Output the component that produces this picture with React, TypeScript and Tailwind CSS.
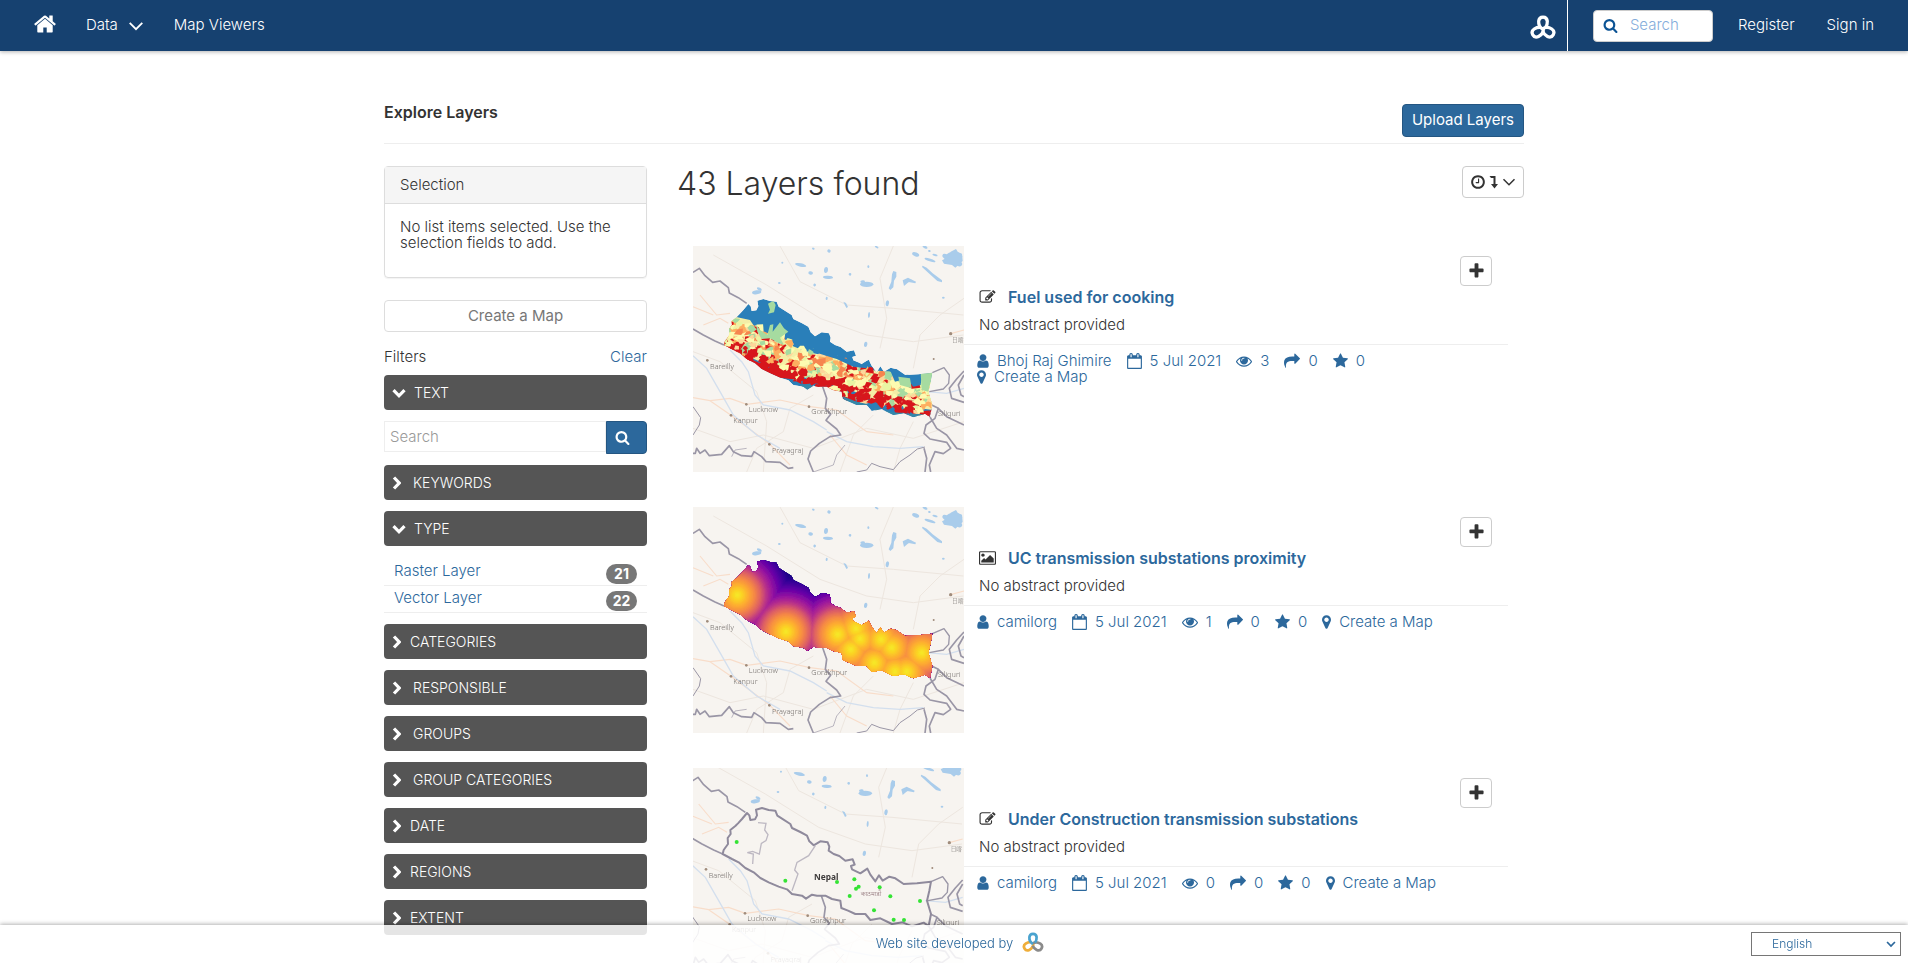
import React from "react";

const ICONS: Record<string, { box: string; d: string }> = {
  home: {
    box: "0 0 1792 1792",
    d: "M1472 992v480q0 26-19 45t-45 19h-384v-384h-256v384h-384q-26 0-45-19t-19-45v-480q0-1 .5-3t.5-3l575-474 575 474q1 2 1 6zm223-69l-62 74q-8 9-21 11h-3q-13 0-21-7l-692-577-692 577q-12 8-24 7-13-2-21-11l-62-74q-8-10-7-23.5t11-21.5l719-599q32-26 76-26t76 26l244 204v-195q0-14 9-23t23-9h192q14 0 23 9t9 23v408l219 182q10 8 11 21.5t-7 23.5z",
  },
  search: {
    box: "0 0 1792 1792",
    d: "M1216 832q0-185-131.5-316.5t-316.5-131.5-316.5 131.5-131.5 316.5 131.5 316.5 316.5 131.5 316.5-131.5 131.5-316.5zm512 832q0 52-38 90t-90 38q-54 0-90-38l-343-342q-179 124-399 124-143 0-273.5-55.5t-225-150-150-225-55.5-273.5 55.5-273.5 150-225 225-150 273.5-55.5 273.5 55.5 225 150 150 225 55.5 273.5q0 220-124 399l343 343q37 37 37 90z",
  },
  user: {
    box: "256 0 1280 1792",
    d: "M1536 1399q0 109-62.5 187t-150.5 78h-854q-88 0-150.5-78t-62.5-187q0-85 8.5-160.5t31.5-152 58.5-131 94-89 134.5-34.5q131 128 313 128t313-128q76 0 134.5 34.5t94 89 58.5 131 31.5 152 8.5 160.5zm-256-887q0 159-112.5 271.5t-271.5 112.5-271.5-112.5-112.5-271.5 112.5-271.5 271.5-112.5 271.5 112.5 112.5 271.5z",
  },
  calendar: {
    box: "64 0 1664 1792",
    d: "M192 1664h1408v-1024h-1408v1024zm384-1216v-288q0-14-9-23t-23-9h-64q-14 0-23 9t-9 23v288q0 14 9 23t23 9h64q14 0 23-9t9-23zm768 0v-288q0-14-9-23t-23-9h-64q-14 0-23 9t-9 23v288q0 14 9 23t23 9h64q14 0 23-9t9-23zm384-64v1280q0 52-38 90t-90 38h-1408q-52 0-90-38t-38-90v-1280q0-52 38-90t90-38h128v-96q0-66 47-113t113-47h64q66 0 113 47t47 113v96h384v-96q0-66 47-113t113-47h64q66 0 113 47t47 113v96h128q52 0 90 38t38 90z",
  },
  eye: {
    box: "0 0 1792 1792",
    d: "M1664 960q-152-236-381-353 61 104 61 225 0 185-131.5 316.5t-316.5 131.5-316.5-131.5-131.5-316.5q0-121 61-225-229 117-381 353 133 205 333.5 326.5t434.5 121.5 434.5-121.5 333.5-326.5zm-720-384q0-20-14-34t-34-14q-125 0-214.5 89.5t-89.5 214.5q0 20 14 34t34 14 34-14 14-34q0-86 61-147t147-61q20 0 34-14t14-34zm848 384q0 34-20 69-140 230-376.5 368.5t-499.5 138.5-499.5-139-376.5-368q-20-35-20-69t20-69q140-229 376.5-368t499.5-139 499.5 139 376.5 368q20 35 20 69z",
  },
  share: {
    box: "0 0 1792 1792",
    d: "M1792 640q0 26-19 45l-512 512q-19 19-45 19t-45-19-19-45v-256h-224q-98 0-175.5 6t-154 21.5-133 42.5-105.5 69.5-80 101-48.5 138.5-17.5 181q0 55 5 123 0 6 2.5 23.5t2.5 26.5q0 15-8.5 25t-23.5 10q-16 0-28-17-7-9-13-22t-13.5-30-10.5-24q-127-285-127-451 0-199 53-333 162-403 875-403h224v-256q0-26 19-45t45-19 45 19l512 512q19 19 19 45z",
  },
  star: {
    box: "64 0 1664 1792",
    d: "M1728 647q0 22-26 48l-363 354 86 500q1 7 1 20 0 21-10.5 35.5t-30.5 14.5q-19 0-40-12l-449-236-449 236q-22 12-40 12-21 0-31.5-14.5t-10.5-35.5q0-6 2-20l86-500-364-354q-25-27-25-48 0-37 56-46l502-73 225-455q19-41 49-41t49 41l225 455 502 73q56 9 56 46z",
  },
  marker: {
    box: "384 0 1024 1792",
    d: "M1152 640q0-106-75-181t-181-75-181 75-75 181 75 181 181 75 181-75 75-181zm256 0q0 109-33 179l-364 774q-16 33-47.5 52t-67.5 19-67.5-19-46.5-52l-365-774q-33-70-33-179 0-212 150-362t362-150 362 150 150 362z",
  },
  vector: {
    box: "0 0 1792 1792",
    d: "M888 1184l116-116-152-152-116 116v56h96v96h56zm440-720q-16-16-33 1l-350 350q-17 17-1 33t33-1l350-350q17-17 1-33zm80 594v190q0 119-84.5 203.5t-203.5 84.5h-832q-119 0-203.5-84.5t-84.5-203.5v-832q0-119 84.5-203.5t203.5-84.5h832q63 0 117 25 15 7 18 23 3 17-9 29l-49 49q-14 14-32 8-23-6-45-6h-832q-66 0-113 47t-47 113v832q0 66 47 113t113 47h832q66 0 113-47t47-113v-126q0-13 9-22l64-64q15-15 35-7t20 29zm-96-738l288 288-672 672h-288v-288zm444 132l-92 92-288-288 92-92q28-28 68-28t68 28l152 152q28 28 28 68t-28 68z",
  },
  raster: {
    box: "-64 0 1920 1792",
    d: "M576 576q0 80-56 136t-136 56-136-56-56-136 56-136 136-56 136 56 56 136zm1024 384v448h-1408v-192l320-320 160 160 512-512zm96-704h-1600q-13 0-22.5 9.5t-9.5 22.5v1216q0 13 9.5 22.5t22.5 9.5h1600q13 0 22.5-9.5t9.5-22.5v-1216q0-13-9.5-22.5t-22.5-9.5zm160 32v1216q0 66-47 113t-113 47h-1600q-66 0-113-47t-47-113v-1216q0-66 47-113t113-47h1600q66 0 113 47t47 113z",
  },
  plus: {
    box: "192 0 1408 1792",
    d: "M1600 736v192q0 40-28 68t-68 28h-416v416q0 40-28 68t-68 28h-192q-40 0-68-28t-28-68v-416h-416q-40 0-68-28t-28-68v-192q0-40 28-68t68-28h416v-416q0-40 28-68t68-28h192q40 0 68 28t28 68v416h416q40 0 68 28t28 68z",
  },
  clock: {
    box: "128 0 1536 1792",
    d: "M1024 544v448q0 14-9 23t-23 9h-320q-14 0-23-9t-9-23v-64q0-14 9-23t23-9h224v-352q0-14 9-23t23-9h64q14 0 23 9t9 23zm416 352q0-148-73-273t-198-198-273-73-273 73-198 198-73 273 73 273 198 198 273 73 273-73 198-198 73-273zm224 0q0 209-103 385.5t-279.5 279.5-385.5 103-385.5-103-279.5-279.5-103-385.5 103-385.5 279.5-279.5 385.5-103 385.5 103 279.5 279.5 103 385.5z",
  },
};

function Icon({ name, className }: { name: string; className: string }) {
  return (
    <svg viewBox={ICONS[name].box} className={className} fill="currentColor" aria-hidden="true">
      <path d={ICONS[name].d} />
    </svg>
  );
}

function Caret({ className, width }: { className: string; width: number }) {
  return (
    <svg viewBox="0 0 14 14" className={className} fill="none" stroke="currentColor" strokeWidth={width} aria-hidden="true">
      <path d="M1.5 4.2 7 9.8l5.5-5.6" />
    </svg>
  );
}

/* Three interlocked loops joined at the centre. */
function Trefoil({ className, colors }: { className: string; colors: [string, string, string] }) {
  const loop = "M13 15C8.5 12.500 8.300 9 8.500 6.500C9 0.800 17 0.800 17.500 6.500C17.700 9 17 11.500 15.500 13.500";
  return (
    <svg viewBox="0 0 26 25" className={className} fill="none" strokeWidth="3.400" aria-hidden="true">
      <path d={loop} stroke={colors[1]} transform="rotate(240 13 14.500)" />
      <path d={loop} stroke={colors[2]} transform="rotate(120 13 14.500)" />
      <path d={loop} stroke={colors[0]} />
    </svg>
  );
}

const NEPAL =
  "M132 330L135 318 148 300 147 282 156 270 155 258 170 246 178 238 190 225 205 207 212 214 215 228 229 226 235 214 232 197 250 192 270 198 290 200 296 215 310 224 335 240 340 252 365 264 385 275 392 292 405 304 425 292 447 295 452 308 450 320 465 330 482 336 500 350 522 346 528 362 517 366 520 376 545 388 566 374 575 392 590 412 601 394 612 410 632 398 650 403 675 420 715 418 757 413 752 440 745 470 757 510 750 546 735 536 700 547 672 535 640 540 605 523 575 528 560 510 530 510 508 500 488 492 485 470 460 465 440 455 415 455 400 452 382 464 370 455 340 450 325 436 300 428 270 415 245 402 225 385 200 372 180 355 160 345Z";

function random(seed: number) {
  let s = seed;
  return () => {
    s = (s * 1664525 + 1013904223) % 4294967296;
    return s / 4294967296;
  };
}

const LAKES: number[][] = [
  [820, 68, 27, 18], [800, 66, 14, 7], [835, 85, 12, 8], [707, 58, 11, 6], [750, 75, 17, 4],
  [765, 60, 8, 3], [362, 90, 17, 5], [392, 114, 7, 5], [438, 105, 6, 9], [444, 127, 15, 5],
  [560, 148, 20, 8], [548, 140, 7, 4], [683, 138, 14, 4], [230, 172, 14, 6], [238, 162, 8, 4],
  [404, 150, 4, 4], [510, 118, 4, 4], [447, 48, 5, 5], [400, 41, 4, 3], [557, 328, 5, 8],
  [622, 205, 5, 9], [440, 190, 3, 5], [567, 240, 3, 9], [790, 188, 4, 3], [298, 144, 4, 3],
  [307, 83, 3, 3], [565, 95, 3, 4], [590, 36, 6, 3], [735, 36, 8, 4], [748, 48, 4, 3],
];

function BaseMap() {
  return (
    <g>
      <rect x="0" y="0" width="900" height="800" fill="#f7f4f0" />
      <g stroke="#ede6df" strokeWidth="3" fill="none">
        <path d="M100 60L260 150 420 250 560 300 700 320 850 300M300 33L360 140 500 210 640 220 850 240M600 340L620 250 600 130 640 33M700 400L720 300 780 240 852 190M39 580L150 620 250 600 400 640 560 580 700 610 852 560M200 711L230 640 310 590 330 520 400 480M480 711L520 600 580 540M39 350L120 380 230 470 260 560 250 711M640 711L660 640 700 560" />
      </g>
      <g stroke="#f8ddca" strokeWidth="3.500" fill="none">
        <path d="M39 488L90 497 150 490 200 508 300 495 390 515 470 525 560 590 640 600M60 180L110 240 150 235M70 270L120 250 145 265M39 215L100 240M90 497L152 540 270 628 330 690M812 296L852 285M450 600L500 660 560 690" />
      </g>
      <g stroke="#d3dfee" strokeWidth="4" fill="none">
        <path d="M150 345L185 380 205 410 225 480 250 510 330 525 400 560 440 585M39 362L80 400 120 470 160 540 230 600 300 640M440 590L500 620 580 635 660 640 730 635M740 470L800 475 852 460" />
      </g>
      <g fill="#a9cceb">
        {LAKES.map(([x, y, rx, ry], i) => (
          <ellipse key={i} cx={x} cy={y} rx={rx} ry={ry} transform={"rotate(" + ((i * 37) % 40 - 10) + " " + x + " " + y + ")"} />
        ))}
        <path d="M640 108l9 3 0 14-7 12-2 20-9 8-5-5 8-20 2-22zM728 92l12 6 18 17 28 21 0 6-14-4-24-22-22-20zM668 136l16-8 24 12-2 5-20-4-14 12zM490 200l8 4 6 12-5 3zM812 50l16-8 6 10 12 4 2 22-22 20-10-8-24-4-6-10 20-10z" />
      </g>
      <g stroke="#9a96a6" strokeWidth="5" fill="none" strokeLinejoin="round">
        <path d="M39 112L58 100 75 122 98 142 120 138 145 158 148 174 175 188 200 205" />
        <path d="M39 282L70 300 105 318 132 330" />
        <path d="M428 455L440 490 436 520 452 538 438 556 470 582 482 600 450 605 418 625 392 648 384 672 400 711" />
        <path d="M757 413L792 398 808 420 806 445 790 462 748 470" strokeWidth="4" />
        <path d="M852 408L830 432 808 460 815 490 852 502M852 420L835 450 843 480 852 485" />
        <path d="M755 510L775 520 765 550 738 570 732 595 750 612 800 622 812 640 790 656 765 650 748 690 752 711M750 546L770 580 800 600 830 640 852 645M775 520L800 545 852 570M732 640L740 670 735 711" />
        <path d="M39 655L46 655 50 640 60 655 75 645 88 662 125 658 148 632 160 650 185 662 215 664 222 650 245 665 258 680 300 682 325 700 340 698" />
        <path d="M39 600L58 570 62 548 39 515M530 711L560 705 575 685 600 695 640 704 660 680 690 660 712 642 735 636" strokeWidth="3" />
        <path d="M200 640L165 645 155 665M400 711L460 690 470 660 495 630" strokeWidth="2" />
      </g>
      <g fill="#a08c7c">
        <circle cx="82" cy="376" r="4" />
        <circle cx="199" cy="508" r="4" />
        <circle cx="153" cy="541" r="4" />
        <circle cx="268" cy="628" r="4" />
        <circle cx="387" cy="515" r="4" />
        <circle cx="812" cy="296" r="5" />
        <circle cx="761" cy="372" r="3" />
      </g>
    </g>
  );
}

function Places() {
  return (
    <g fill="#75706d" fontSize="22" fontFamily="Noto Sans, Noto Sans CJK SC, sans-serif">
      <text x="90" y="401">Bareilly</text>
      <text x="206" y="532">Lucknow</text>
      <text x="160" y="563">Kanpur</text>
      <text x="276" y="655">Prayagraj</text>
      <text x="394" y="538">Gorakhpur</text>
      <text x="774" y="542">Siliguri</text>
      <text x="816" y="320" fontSize="17">日喀</text>
    </g>
  );
}

function FuelLayer() {
  const rnd = random(11);
  const specks: React.ReactNode[] = [];
  const palette = ["#fdfbb0", "#e9f5a3", "#a6dba0", "#fdae61", "#fdd79a", "#d7191c", "#f6854f"];
  // The southern edge runs from (132,330) to (757,545).
  const south = (x: number) => (x < 430 ? 345 + (x - 140) * 0.42 : 467 + (x - 430) * 0.27);
  for (let i = 0; i < 620; i++) {
    const x = 125 + rnd() * 640;
    const up = rnd();
    const y = south(x) - up * 105;
    const r = 6 + rnd() * 8;
    const pick = up < 0.36 ? (rnd() < 0.84 ? 5 : Math.floor(rnd() * 5)) : rnd() < 0.14 ? 5 : [0, 1, 2, 3, 4, 6, 0][Math.floor(rnd() * 7)];
    const pts = [0, 1, 2, 3, 4]
      .map((k) => {
        const a = (k / 5) * Math.PI * 2 + rnd();
        const q = r * (0.5 + rnd() * 0.9);
        return (x + Math.cos(a) * q * 1.2).toFixed(1) + "," + (y + Math.sin(a) * q).toFixed(1);
      })
      .join(" ");
    specks.push(<polygon key={i} points={pts} fill={palette[pick]} />);
  }
  return (
    <g clipPath="url(#nepal-fuel)">
      <path d={NEPAL} fill="#2b7fb9" />
      <path d="M130 280L165 245 210 255 240 300 330 330 380 350 470 370 520 385 570 405 630 410 660 440 760 460 760 525 600 505 480 450 380 430 240 380 130 330Z" fill="#f4eea6" />
      {specks}
      <path d="M155 345L230 380 280 405 340 418 350 434 300 428 240 402 170 362ZM380 428L430 438 495 428 495 442 440 452 385 440Z" fill="#d7191c" />
      <path d="M264 206L280 197 287 210 282 232 264 236 270 224Z" fill="#a6dba0" />
      <path d="M228 268L240 285 262 300 270 270 280 268 278 290 300 262 312 280 325 290 300 308 312 330 290 322 270 310 245 312 232 290Z" fill="#a6dba0" />
      <path d="M630 405L655 400 690 422 725 425 722 450 700 455 680 430 645 440Z" fill="#2b7fb9" />
      <path d="M722 415L760 410 745 470 725 465ZM655 425L690 430 695 460 660 450Z" fill="#a6dba0" />
      <path d="M370 330L415 345 470 360 515 378 545 382 570 375 560 400 520 395 470 372 400 350Z" fill="#2b7fb9" />
      <path d="M360 450L385 446 400 455 380 466ZM488 484L530 500 565 508 560 516 500 506ZM580 520L640 532 690 536 735 538 730 550 650 545 590 530Z" fill="#3587a8" />
    </g>
  );
}

const STATIONS: number[][] = [
  [172, 297], [318, 407], [473, 415], [528, 398], [540, 428], [512, 460],
  [603, 430], [635, 455], [583, 500], [645, 527], [680, 527], [725, 470],
];

const RAMP: [number, number[]][] = [
  [0, [244, 237, 39]], [16, [251, 212, 36]], [36, [253, 170, 50]], [54, [245, 135, 70]],
  [72, [222, 97, 100]], [90, [185, 50, 137]], [108, [150, 20, 160]], [130, [100, 0, 167]],
  [155, [48, 5, 150]], [180, [13, 8, 120]],
];

function rampColor(d: number) {
  for (let i = 1; i < RAMP.length; i++) {
    if (d <= RAMP[i][0]) {
      const [a, ca] = RAMP[i - 1];
      const [b, cb] = RAMP[i];
      const t = (d - a) / (b - a);
      return "rgb(" + ca.map((v, k) => Math.round(v + (cb[k] - v) * t)).join(",") + ")";
    }
  }
  return "rgb(13,8,120)";
}

function ProximityLayer() {
  const rings: React.ReactNode[] = [];
  for (let r = 180; r > 0; r -= 4) {
    STATIONS.forEach(([x, y], i) => rings.push(<circle key={r + "-" + i} cx={x} cy={y} r={r} fill={rampColor(r)} />));
  }
  return (
    <g clipPath="url(#nepal-proximity)">
      <path d={NEPAL} fill="#0d0878" />
      {rings}
    </g>
  );
}

function StationsLayer() {
  return (
    <g>
      <path d={NEPAL} fill="none" stroke="#8f8a9c" strokeWidth="6" strokeLinejoin="round" />
      <path d="M238 236L262 238 258 258 268 272 262 290 248 298 242 330 222 322 206 326 224 330 222 360M410 305L390 335 355 355 348 378 358 390 340 440" fill="none" stroke="#bdb8c2" strokeWidth="4" />
      <text x="406" y="409" fontSize="25" fontWeight="700" fill="#3f3c3c" fontFamily="Noto Sans, sans-serif">Nepal</text>
      <text x="546" y="456" fontSize="20" fill="#8b6c72" fontFamily="Noto Sans, sans-serif">काठमाडौं</text>
      <g fill="#36e336">
        {[[174, 294], [320, 410], [475, 414], [527, 406], [540, 428], [532, 434], [513, 456], [603, 430], [635, 457], [586, 499], [645, 527], [676, 528], [724, 471]].map(([x, y], i) => (
          <circle key={i} cx={x} cy={y} r="6" />
        ))}
      </g>
    </g>
  );
}

function Thumbnail({ kind }: { kind: string }) {
  return (
    <svg
      viewBox={kind === "stations" ? "43 72 813 678" : "39 33 813 678"}
      preserveAspectRatio="xMidYMid slice"
      className="h-[226px] w-[271px] shrink-0"
      role="img"
      aria-label="Layer thumbnail"
    >
      <defs>
        <clipPath id={"nepal-" + kind}>
          <path d={NEPAL} />
        </clipPath>
        <filter id={"soft-" + kind} x="0" y="0" width="100%" height="100%">
          <feGaussianBlur stdDeviation="2" />
        </filter>
      </defs>
      <g filter={"url(#soft-" + kind + ")"}>
        <BaseMap />
        {kind === "fuel" && <FuelLayer />}
        {kind === "proximity" && <ProximityLayer />}
        {kind === "stations" && <StationsLayer />}
        <Places />
      </g>
    </svg>
  );
}

type Layer = { title: string; icon: string; owner: string; views: number; kind: string };

const LAYERS: Layer[] = [
  { title: "Fuel used for cooking", icon: "vector", owner: "Bhoj Raj Ghimire", views: 3, kind: "fuel" },
  { title: "UC transmission substations proximity", icon: "raster", owner: "camilorg", views: 1, kind: "proximity" },
  { title: "Under Construction transmission substations", icon: "vector", owner: "camilorg", views: 0, kind: "stations" },
];

function LayerItem({ layer }: { layer: Layer }) {
  return (
    <article className="flex">
      <Thumbnail kind={layer.kind} />
      <div className="min-w-0 flex-1">
        <div className="flex justify-end pt-[10px] pr-4">
          <button type="button" aria-label={"Add " + layer.title} className="flex h-[30px] w-8 items-center justify-center rounded border border-[#ccc] bg-white text-[#333]">
            <Icon name="plus" className="h-[18px] w-[15px]" />
          </button>
        </div>
        <h4 className="flex h-[22px] items-center pl-[15px] text-base font-semibold">
          <Icon name={layer.icon} className="mr-3 h-4 w-[17px] shrink-0" />
          <a href="#layer" className="text-[#2c689c]">{layer.title}</a>
        </h4>
        <p className="mt-[7px] pl-[15px] leading-5">No abstract provided</p>
        <ul className="mt-[9px] flex flex-wrap gap-x-[15px] border-t border-[#eee] pt-2 pr-6 pl-[13px] leading-4 text-[#2c689c]">
          <li><a href="#owner" className="flex items-center gap-2"><Icon name="user" className="h-4 w-3" />{layer.owner}</a></li>
          <li><a href="#date" className="flex items-center gap-2"><Icon name="calendar" className="h-4 w-[15px]" />5 Jul 2021</a></li>
          <li><a href="#views" className="flex items-center gap-2"><Icon name="eye" className="size-4" />{layer.views}</a></li>
          <li><a href="#shares" className="flex items-center gap-2"><Icon name="share" className="size-4" />0</a></li>
          <li><a href="#rating" className="flex items-center gap-2"><Icon name="star" className="h-4 w-[15px]" />0</a></li>
          <li><a href="#map" className="flex items-center gap-2"><Icon name="marker" className="h-4 w-[9px]" />Create a Map</a></li>
        </ul>
      </div>
    </article>
  );
}

function FilterHeading({ label, open, wide }: { label: string; open?: boolean; wide?: boolean }) {
  return (
    <button
      type="button"
      aria-expanded={!!open}
      className="flex h-[35px] w-full items-center rounded bg-[#555] pl-2 text-left text-sm text-white"
    >
      {open ? (
        <Caret width={3.2} className="size-[14px]" />
      ) : (
        <svg viewBox="0 0 9 14" className="h-[14px] w-[9px]" fill="none" stroke="currentColor" strokeWidth="3.200" aria-hidden="true">
          <path d="M2 1.500 7.200 7 2 12.500" />
        </svg>
      )}
      <span className={open ? "ml-2" : wide ? "ml-3" : "ml-[9px]"}>{label}</span>
    </button>
  );
}

export default function App() {
  return (
    <div className="min-h-screen bg-white font-['Inter','Liberation_Sans',sans-serif] text-[15px] font-light text-[#333]">
      <header className="flex h-[51px] items-center justify-between bg-[#164170] pr-[34px] pl-[33px] text-white shadow-[0_1px_4px_rgba(0,0,0,0.3)]">
        <nav className="flex items-center">
          <a href="#home" aria-label="Home" className="mr-[29px]"><Icon name="home" className="mb-1 size-6" /></a>
          <a href="#data" className="mr-[30px] flex items-center gap-[10px]">Data <Caret width={1.6} className="size-4" /></a>
          <a href="#maps">Map Viewers</a>
        </nav>
        <div className="flex items-center self-stretch">
          <a href="#site" aria-label="Developer site" className="flex h-full items-center border-r border-white pr-[11px]">
            <Trefoil className="mt-[2px] h-6 w-[26px]" colors={["#fff", "#fff", "#fff"]} />
          </a>
          <label className="mr-[25px] ml-[25px] flex h-8 w-[120px] items-center rounded border border-[#ccc] bg-white pl-[9px]">
            <Icon name="search" className="size-[15px] shrink-0 text-[#0b5394]" />
            <input aria-label="Search" placeholder="Search" className="ml-3 w-full min-w-0 bg-transparent text-[#333] outline-none placeholder:text-[#85addb]" />
          </label>
          <a href="#register" className="mr-8">Register</a>
          <a href="#signin">Sign in</a>
        </div>
      </header>

      <main className="mx-auto max-w-[1140px] pt-[53px] pb-16">
        <div className="flex items-start justify-between border-b border-[#eee] pb-[6px]">
          <h2 className="text-base font-semibold leading-4">Explore Layers</h2>
          <button type="button" className="h-[33px] rounded border border-[#245682] bg-[#2c689c] px-[9px] font-normal text-white">Upload Layers</button>
        </div>

        <div className="mt-[22px] flex">
          <aside className="w-[263px] shrink-0">
            <section className="rounded border border-[#ddd] shadow-[0_1px_1px_rgba(0,0,0,0.05)]">
              <h3 className="flex h-[37px] items-center border-b border-[#ddd] bg-[#f5f5f5] px-[15px]">Selection</h3>
              <p className="h-[73px] px-[15px] pt-[15px] leading-4">No list items selected. Use the selection fields to add.</p>
            </section>
            <button type="button" className="mt-[22px] h-8 w-full rounded border border-[#ddd] bg-white font-normal text-[#777]">Create a Map</button>
            <div className="mt-[15px] flex justify-between leading-5">
              <h4>Filters</h4>
              <a href="#clear" className="text-[#2c689c]">Clear</a>
            </div>
            <div className="mt-2 flex flex-col gap-[11px]">
              <FilterHeading label="TEXT" open />
              <div className="flex items-start">
                <input aria-label="Search layers" placeholder="Search" className="h-[31px] min-w-0 flex-1 border border-[#eee] px-[5px] outline-none placeholder:text-[#999]" />
                <button type="button" aria-label="Search" className="flex h-[33px] w-[41px] items-center rounded-r border border-[#245682] bg-[#2c689c] pl-2 text-white">
                  <Icon name="search" className="size-[15px]" />
                </button>
              </div>
              <FilterHeading label="KEYWORDS" wide />
              <FilterHeading label="TYPE" open />
              <ul className="pt-[2px] text-[#2c689c]">
                <li className="flex h-[27px] items-start justify-between border-b border-[#eee] px-[10px]">
                  <a href="#raster" className="leading-6">Raster Layer</a>
                  <span className="mt-[5px] flex h-5 w-[31px] items-center justify-center rounded-full bg-[#777] text-sm font-bold text-white">21</span>
                </li>
                <li className="flex h-[27px] items-start justify-between border-b border-[#eee] px-[10px]">
                  <a href="#vector" className="leading-6">Vector Layer</a>
                  <span className="mt-[5px] flex h-5 w-[31px] items-center justify-center rounded-full bg-[#777] text-sm font-bold text-white">22</span>
                </li>
              </ul>
              <FilterHeading label="CATEGORIES" />
              <FilterHeading label="RESPONSIBLE" wide />
              <FilterHeading label="GROUPS" wide />
              <FilterHeading label="GROUP CATEGORIES" wide />
              <FilterHeading label="DATE" />
              <FilterHeading label="REGIONS" />
              <FilterHeading label="EXTENT" />
            </div>
          </aside>

          <section className="ml-[30px] min-w-0 flex-1">
            <div className="flex items-start justify-between">
              <h1 className="text-[32px] leading-9">43 Layers found</h1>
              <button type="button" aria-label="Sort order" className="flex h-8 w-[62px] items-center justify-center gap-1 rounded border border-[#ccc] bg-white text-[#333]">
                <Icon name="clock" className="h-4 w-[14px]" />
                <svg viewBox="0 0 9 14" className="h-[14px] w-[9px]" fill="currentColor" aria-hidden="true">
                  <path d="M0.500 1H6.500V9H9L5.500 13.500 2 9H4.500V3H2Z" />
                </svg>
                <Caret width={1.5} className="size-[14px]" />
              </button>
            </div>
            <div className="mt-11 flex flex-col gap-[35px] px-4">
              {LAYERS.map((layer) => (
                <LayerItem key={layer.title} layer={layer} />
              ))}
            </div>
          </section>
        </div>
      </main>

      <footer className="fixed inset-x-0 bottom-0 grid h-[38px] grid-cols-[1fr_auto_1fr] items-center bg-white/85 px-[7px] text-[#2c689c] shadow-[0_-1px_4px_rgba(0,0,0,0.3)]">
        <a href="#developer" className="col-start-2 flex items-center gap-[9px] pl-3 text-[13px]">
          Web site developed by
          <Trefoil className="mb-1 h-5 w-[22px]" colors={["#4aa3cf", "#efae3a", "#8b8b8b"]} />
        </a>
        <div className="relative flex items-center justify-self-end">
          <select aria-label="Language" defaultValue="en" className="h-6 w-[150px] appearance-none border border-[#767676] bg-white pl-5 text-xs">
            <option value="en">English</option>
          </select>
          <Caret width={2.4} className="pointer-events-none absolute right-[5px] size-[10px]" />
        </div>
      </footer>
    </div>
  );
}
